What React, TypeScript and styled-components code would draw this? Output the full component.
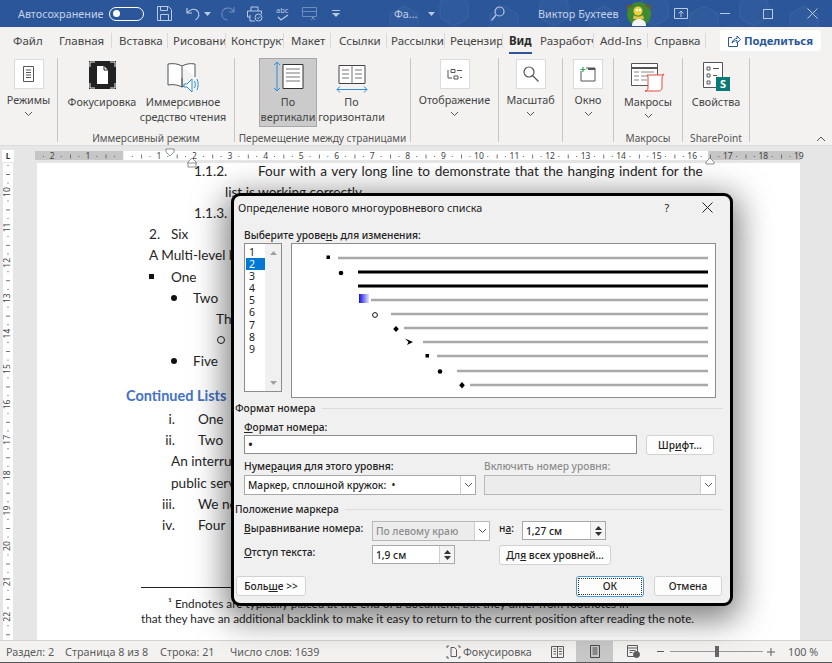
import React from 'react';
import styled, { createGlobalStyle } from 'styled-components';

const uiFont = '"Noto Sans", "Open Sans", sans-serif';
const docFont = 'Lato, "Noto Sans", sans-serif';

const GlobalStyle = createGlobalStyle`
  html, body { margin: 0; padding: 0; background: #e6e6e6; }
  * { box-sizing: border-box; }
`;

const Window = styled.div`
  position: relative;
  width: 832px;
  height: 663px;
  overflow: hidden;
  display: flex;
  flex-direction: column;
  font-family: ${uiFont};
  color: #333;
`;

/* title bar */
const TitleBar = styled.div`
  position: relative;
  flex: none;
  height: 27px;
  display: flex;
  align-items: center;
  padding-left: 18px;
  background: #2b579a;
  color: #c4d1e6;
  font-size: 10.8px;
  white-space: nowrap;
`;
const HexOverlay = styled.svg`
  position: absolute;
  left: 0;
  top: 0;
  pointer-events: none;
`;
const TitleSlot = styled.span<{ $w: number; $ml?: number; $left?: boolean }>`
  position: relative;
  flex: none;
  display: flex;
  align-items: center;
  justify-content: ${p => (p.$left ? 'flex-start' : 'center')};
  width: ${p => p.$w}px;
  margin-left: ${p => p.$ml || 0}px;
`;
const Toggle = styled.span`
  position: relative;
  flex: none;
  width: 35px;
  height: 14px;
  margin-left: 7px;
  border: 1.5px solid #fff;
  border-radius: 7px;
  &::before {
    content: '';
    position: absolute;
    left: 3px;
    top: 2px;
    width: 7px;
    height: 7px;
    border-radius: 50%;
    background: #fff;
  }
`;

/* tabs */
const TabBar = styled.div`
  flex: none;
  height: 27px;
  display: flex;
  align-items: center;
  background: #f3f2f1;
  font-size: 11.5px;
  color: #444;
`;
const Tab = styled.div<{ $w: number; $pl: number; $sep?: boolean; $active?: boolean }>`
  position: relative;
  flex: none;
  width: ${p => p.$w}px;
  height: 15px;
  line-height: 15px;
  padding-left: ${p => p.$pl}px;
  padding-right: 3px;
  overflow: ${p => (p.$active ? 'visible' : 'hidden')};
  white-space: nowrap;
  border-right: ${p => (p.$sep ? '1px solid #dcdad8' : '0')};
  font-weight: ${p => (p.$active ? 700 : 400)};
  color: ${p => (p.$active ? '#2b2b2b' : '#444')};
  ${p =>
    p.$active &&
    `&::after {
      content: '';
      position: absolute;
      left: 6px;
      right: 3px;
      bottom: -6px;
      height: 2.5px;
      background: #2b579a;
    }`}
`;
const ShareButton = styled.div`
  flex: none;
  width: 101px;
  height: 21px;
  margin-left: 14px;
  display: flex;
  align-items: center;
  gap: 3px;
  padding-left: 7px;
  background: #fff;
  border-radius: 3px;
  color: #2b579a;
  font-size: 11.3px;
  font-weight: 700;
  white-space: nowrap;
`;

/* ribbon */
const Ribbon = styled.div`
  flex: none;
  height: 91px;
  display: flex;
  padding: 4px 0 3px;
  background: #f3f2f1;
  font-size: 10.8px;
  color: #444;
`;
const Group = styled.div<{ $w: number }>`
  flex: none;
  width: ${p => p.$w}px;
  display: flex;
  flex-direction: column;
  border-right: 1px solid #c8c6c4;
`;
const GroupButtons = styled.div`
  flex: 1;
  display: flex;
  justify-content: center;
`;
const GroupLabel = styled.div`
  height: 14px;
  margin-bottom: -3px;
  line-height: 14px;
  text-align: center;
  font-size: 10.1px;
  white-space: nowrap;
  color: #555;
`;
const RibbonButton = styled.div<{ $w: number; $active?: boolean }>`
  flex: none;
  width: ${p => p.$w}px;
  height: ${p => (p.$active ? '69px' : 'auto')};
  display: flex;
  flex-direction: column;
  align-items: center;
  text-align: center;
  line-height: 15px;
  white-space: nowrap;
  background: ${p => (p.$active ? '#cbcbcb' : 'transparent')};
  outline: ${p => (p.$active ? '1px solid #a8a8a8' : '0')};
  outline-offset: -1px;
`;
const IconSlot = styled.div<{ $h: number }>`
  height: ${p => p.$h}px;
  display: flex;
  align-items: flex-start;
  justify-content: center;
`;
const BoxIcon = styled.div`
  width: 30px;
  height: 30px;
  margin-top: 1px;
  display: flex;
  align-items: center;
  justify-content: center;
  background: #fff;
  border: 1px solid #dddcdb;
`;
const ChevronSlot = styled.span`
  display: block;
  margin-top: 4px;
  line-height: 0;
`;
const CollapseSlot = styled.div`
  flex: 1;
  display: flex;
  align-items: flex-end;
  justify-content: flex-end;
  padding: 0 6px 0 0;
`;

/* rulers */
const RulerBar = styled.div`
  position: relative;
  z-index: 2;
  flex: none;
  height: 18px;
  display: flex;
  padding-left: 2px;
  background: #e6e6e6;
  border-top: 1px solid #dcdcdc;
`;
const RulerCorner = styled.div`
  flex: none;
  width: 12px;
  height: 12px;
  margin-top: 4px;
  background: #fff;
  color: #333;
  font-size: 8px;
  font-weight: 700;
  line-height: 11px;
  text-align: center;
`;
const RulerSvg = styled.svg`
  flex: none;
  overflow: visible;
  font-family: ${uiFont};
`;

/* document */
const DocArea = styled.div`
  flex: 1;
  min-height: 0;
  display: flex;
  background: #e6e6e6;
`;
const SideRuler = styled.svg`
  flex: none;
  margin: 0 24px 0 3px;
  font-family: ${uiFont};
`;
const Page = styled.div`
  flex: none;
  width: 763px;
  height: 100%;
  overflow: hidden;
  background: #fff;
  font-family: ${docFont};
  font-size: 13.6px;
  color: #262626;
`;
const DocLines = styled.div`
  margin-top: -3px;
`;
const DocLine = styled.div<{ $indent: number; $justify?: number }>`
  display: flex;
  align-items: center;
  height: 21.2px;
  padding-left: ${p => p.$indent}px;
  word-spacing: ${p => p.$justify || 0}px;
  white-space: nowrap;
`;
const Marker = styled.span<{ $w: number; $right?: boolean; $pr?: number }>`
  flex: none;
  width: ${p => p.$w}px;
  padding-right: ${p => p.$pr || 0}px;
  text-align: ${p => (p.$right ? 'right' : 'left')};
`;
const Bullet = styled.span<{ $kind: 'square' | 'dot' | 'ring'; $w: number }>`
  flex: none;
  width: ${p => p.$w}px;
  &::before {
    content: '';
    display: block;
    width: ${p => (p.$kind === 'square' ? 5 : 6)}px;
    height: ${p => (p.$kind === 'square' ? 5 : 6)}px;
    background: ${p => (p.$kind === 'ring' ? 'transparent' : '#111')};
    border: ${p => (p.$kind === 'ring' ? '1px solid #222' : '0')};
    border-radius: ${p => (p.$kind === 'square' ? '0' : '50%')};
  }
`;
const DocHeading = styled.div`
  margin-top: 13px;
  margin-bottom: 2.5px;
  height: 21px;
  line-height: 21px;
  padding-left: 89px;
  color: #4472c4;
  font-size: 14.5px;
  font-weight: 700;
  white-space: nowrap;
`;
const FootRule = styled.div`
  width: 190px;
  height: 1px;
  margin: 51.5px 0 0 104px;
  background: #222;
`;
const FootLine = styled.div<{ $indent: number }>`
  height: 15px;
  line-height: 15px;
  padding-left: ${p => p.$indent}px;
  font-family: ${docFont};
  font-size: 11.75px;
  white-space: nowrap;
`;
const FootNotes = styled.div`
  margin-top: 8px;
`;

/* status bar */
const StatusBar = styled.div`
  flex: none;
  height: 23px;
  display: flex;
  align-items: center;
  padding-left: 6px;
  background: #f3f2f1;
  border-top: 1px solid #d6d4d2;
  border-bottom: 1px solid #555;
  font-size: 10.8px;
  color: #5c5c5c;
  white-space: nowrap;
`;
const StatusItem = styled.span<{ $w: number }>`
  flex: none;
  width: ${p => p.$w}px;
`;
const FocusItem = styled.span`
  flex: none;
  display: flex;
  align-items: center;
  gap: 2px;
  margin-left: 133px;
  width: 92px;
`;
const ViewButton = styled.span<{ $w: number; $active?: boolean }>`
  flex: none;
  align-self: stretch;
  width: ${p => p.$w}px;
  display: flex;
  align-items: center;
  justify-content: center;
  background: ${p => (p.$active ? '#c8c8c8' : 'transparent')};
`;
const ZoomSlider = styled.span`
  position: relative;
  flex: none;
  width: 93px;
  height: 1px;
  margin: 0 3px;
  background: #9a9a9a;
  &::after {
    content: '';
    position: absolute;
    left: 45px;
    top: -5px;
    width: 4px;
    height: 11px;
    background: #666;
  }
`;
const ZoomPct = styled.span`
  flex: none;
  margin-left: 12px;
`;

/* dialog */
const Dialog = styled.div`
  position: absolute;
  z-index: 5;
  left: 231px;
  top: 193px;
  width: 502px;
  height: 413px;
  display: flex;
  flex-direction: column;
  background: #f0f0f0;
  border: 3px solid #000;
  border-radius: 9px;
  box-shadow: 0 8px 32px 6px rgba(0, 0, 0, 0.5);
  font-size: 10.2px;
  font-weight: 500;
  color: #222;
`;
const DialogTitle = styled.div`
  flex: none;
  height: 22px;
  display: flex;
  align-items: center;
  padding-left: 4px;
  font-size: 10.8px;
  font-weight: 400;
  color: #222;
  white-space: nowrap;
`;
const TitleAction = styled.span<{ $ml: number }>`
  flex: none;
  display: flex;
  margin-left: ${p => p.$ml}px;
`;
const DialogBody = styled.div`
  flex: none;
  padding: 0 14px 0 10px;
`;
const FieldLabel = styled.div<{ $mt?: number; $off?: boolean }>`
  height: 12px;
  line-height: 12px;
  margin-top: ${p => p.$mt || 0}px;
  white-space: nowrap;
  color: ${p => (p.$off ? '#8c8c8c' : '#222')};
  u { text-underline-offset: 1px; }
`;
const LevelArea = styled.div`
  display: flex;
  gap: 9px;
  margin-top: 2px;
`;
const LevelList = styled.div`
  flex: none;
  width: 38px;
  height: 149px;
  display: flex;
  background: #fff;
  border: 1px solid #8c8c8c;
`;
const LevelItems = styled.div`
  flex: none;
  width: 20px;
  padding: 2px 0 0 1px;
`;
const LevelItem = styled.div<{ $on?: boolean }>`
  height: 12.1px;
  line-height: 12px;
  padding-left: 3px;
  background: ${p => (p.$on ? '#0078d7' : 'transparent')};
  color: ${p => (p.$on ? '#fff' : '#222')};
  font-weight: 400;
  font-size: 10.5px;
`;
const LevelScroll = styled.div`
  flex: 1;
  display: flex;
  flex-direction: column;
  align-items: center;
  justify-content: space-between;
  padding: 7px 0 6px;
  background: #f0f0f0;
`;
const Preview = styled.div`
  flex: none;
  width: 425px;
  height: 155px;
  background: #fff;
  border: 1px solid #8c8c8c;
`;
const SectionHead = styled.div<{ $mt: number }>`
  display: flex;
  align-items: center;
  gap: 6px;
  height: 14px;
  margin: ${p => p.$mt}px -7px 0 -9px;
  white-space: nowrap;
  &::after {
    content: '';
    flex: 1;
    height: 1px;
    background: #dcdcdc;
  }
`;
const InputRow = styled.div`
  display: flex;
  gap: 9px;
  margin-top: 2px;
`;
const TextInput = styled.div`
  flex: none;
  width: 393px;
  height: 19px;
  padding-left: 3px;
  line-height: 17px;
  background: #fff;
  border: 1px solid #8c8c8c;
  font-size: 13px;
`;
const PushButton = styled.div<{ $w: number; $primary?: boolean }>`
  position: relative;
  flex: none;
  width: ${p => p.$w}px;
  height: ${p => (p.$primary ? 21 : 20)}px;
  line-height: 18px;
  text-align: center;
  background: #fdfdfd;
  border: 1px solid ${p => (p.$primary ? '#4a9ad8' : '#d2d2d2')};
  border-radius: 3px;
  white-space: nowrap;
  ${p =>
    p.$primary &&
    `&::after {
      content: '';
      position: absolute;
      inset: 1px;
      border: 1px dotted #333;
    }`}
`;
const TwoColumns = styled.div`
  display: grid;
  grid-template-columns: 232px 232px;
  column-gap: 8px;
`;
const SelectBox = styled.div<{ $mt?: number; $w?: number; $off?: boolean }>`
  display: flex;
  align-items: center;
  justify-content: space-between;
  width: ${p => (p.$w ? `${p.$w}px` : 'auto')};
  height: 20px;
  margin-top: ${p => p.$mt || 0}px;
  padding-left: 3px;
  background: ${p => (p.$off ? '#ececec' : '#fff')};
  border: 1px solid ${p => (p.$off ? '#b9b9b9' : '#a8a8a8')};
  color: ${p => (p.$off ? '#8c8c8c' : '#222')};
  white-space: nowrap;
`;
const SelectArrow = styled.span`
  flex: none;
  align-self: stretch;
  width: 15px;
  display: flex;
  align-items: center;
  justify-content: center;
  background: #fff;
  border-left: 1px solid #d0d0d0;
`;
const PositionRow = styled.div<{ $mt: number }>`
  display: flex;
  align-items: flex-start;
  margin-top: ${p => p.$mt}px;
`;
const PositionLabel = styled.div<{ $w: number; $ml?: number }>`
  flex: none;
  width: ${p => p.$w}px;
  margin-left: ${p => p.$ml || 0}px;
  line-height: 15px;
  white-space: nowrap;
  u { text-underline-offset: 1px; }
`;
const SpinBox = styled.div<{ $w: number }>`
  flex: none;
  display: flex;
  align-items: center;
  justify-content: space-between;
  width: ${p => p.$w}px;
  height: 19px;
  padding-left: 3px;
  background: #fff;
  border: 1px solid #a8a8a8;
`;
const SpinArrows = styled.span`
  flex: none;
  align-self: stretch;
  width: 15px;
  display: flex;
  flex-direction: column;
  align-items: center;
  justify-content: center;
  gap: 2px;
  background: #f4f4f4;
  border-left: 1px solid #d0d0d0;
`;
const Footer = styled.div`
  flex: none;
  display: flex;
  align-items: flex-start;
  margin-top: 11px;
  padding: 0 8px 0 2px;
`;
const FooterRight = styled.div`
  margin-left: auto;
  display: flex;
  gap: 10px;
`;

const MiniChevron = ({ color = '#555', size = 9 }: { color?: string; size?: number }) => (
  <svg width={size} height={size - 3} viewBox='0 0 9 6' fill='none'>
    <path d='M1 1l3.5 3.5L8 1' stroke={color} strokeWidth='1' />
  </svg>
);

const Tri = ({ up, color = '#333' }: { up?: boolean; color?: string }) => (
  <svg width='7' height='4' viewBox='0 0 7 4'>
    <path d={up ? 'M3.5 0L7 4H0z' : 'M0 0h7L3.5 4z'} fill={color} />
  </svg>
);

const T = '#b9c9e2';

const hexes = [390, 440, 490, 540, 590, 640, 690, 740, 790].map((x, i) => {
  const d = i % 2 ? -12 : 0;
  return `${x},${14 + d} ${x + 14},${6 + d} ${x + 28},${14 + d} ${x + 28},${30 + d} ${x + 14},${38 + d} ${x},${30 + d}`;
});

const Avatar = () => (
  <svg width='24' height='24' viewBox='0 0 24 24'>
    <circle cx='12' cy='12' r='12' fill='#3f8a2e' />
    <path d='M0 8c6-7 18-7 24 0V3H0z' fill='#6b5a2a' />
    <circle cx='11' cy='9' r='4.5' fill='#f2cf3a' />
    <path d='M7 13c2 2 6 2 9 0l1 4H6z' fill='#e2c24a' />
    <path d='M5 24c0-5 3-7 7-7s7 2 7 7z' fill='#f4f4f4' />
    <circle cx='10' cy='8' r='1.2' fill='#fff' />
    <circle cx='13' cy='8' r='1.2' fill='#fff' />
  </svg>
);

const RulerGraphic = () => {
  const zero = 123.4;
  const cm = 35.55;
  const marks: React.ReactNode[] = [];
  for (let c = -3; c <= 19; c++) {
    const x = zero + c * cm;
    if (c !== 0 && c > -3) {
      marks.push(
        <text key={`n${c}`} x={x} y={13.2} fontSize='8.5' textAnchor='middle' fill='#444'>
          {Math.abs(c)}
        </text>
      );
    }
    if (c < 19) {
      if (x + cm / 4 > 35) marks.push(<circle key={`a${c}`} cx={x + cm / 4} cy={10.5} r={0.6} fill='#555' />);
      if (x + cm / 2 > 35) marks.push(<rect key={`b${c}`} x={x + cm / 2} y={8.5} width={0.9} height={4} fill='#666' />);
      if (x + (3 * cm) / 4 > 35) marks.push(<circle key={`c${c}`} cx={x + (3 * cm) / 4} cy={10.5} r={0.6} fill='#555' />);
    }
  }
  return (
    <RulerSvg width='818' height='18' viewBox='14 0 818 18'>
      <rect x='35' y='5' width='88.4' height='9' fill='#c6c6c6' />
      <rect x='123.4' y='5' width='585' height='9' fill='#fff' />
      <rect x='708.4' y='5' width='92' height='9' fill='#c6c6c6' />
      {marks}
      <path d='M166 3h8v3l-4 4-4-4z' fill='#fff' stroke='#777' strokeWidth='.8' />
      <path d='M188 16l4-4 4 4v2h-8z' fill='#fff' stroke='#777' strokeWidth='.8' />
      <rect x='188' y='17' width='8' height='4' fill='#fff' stroke='#777' strokeWidth='.8' />
      <path d='M706 16l4-4 4 4v2h-8z' fill='#fff' stroke='#777' strokeWidth='.8' />
    </RulerSvg>
  );
};

const VerticalRuler = () => {
  const at = (n: number) => 192 + (n - 10) * 35.4 - 163;
  const marks: React.ReactNode[] = [];
  for (let n = 9; n <= 22; n++) {
    const y = at(n);
    if (n > 9) {
      marks.push(
        <text key={`t${n}`} x={5} y={y} fontSize='8.5' fill='#444' textAnchor='middle' dominantBaseline='middle' transform={`rotate(-90 5 ${y})`}>
          {n}
        </text>
      );
    }
    marks.push(<circle key={`a${n}`} cx={5} cy={y + 8.85} r={0.6} fill='#555' />);
    marks.push(<rect key={`b${n}`} x={3} y={y + 17.5} width={4} height={0.9} fill='#666' />);
    marks.push(<circle key={`c${n}`} cx={5} cy={y + 26.5} r={0.6} fill='#555' />);
  }
  return (
    <SideRuler width='10' height='477' viewBox='0 0 10 477'>
      <rect width='10' height='477' fill='#fff' />
      {marks}
    </SideRuler>
  );
};

const previewRows: [number, number, boolean][] = [
  [338, 258, false],
  [358, 272, true],
  [358, 286, true],
  [371, 300, false],
  [391, 314, false],
  [404, 328, false],
  [423, 342, false],
  [437, 356, false],
  [457, 371, false],
  [470, 385, false],
];

const PreviewGraphic = () => (
  <svg width='423' height='153' viewBox='292 244 423 153'>
    <defs>
      <linearGradient id='blueFade' x1='0' x2='1' y1='0' y2='0'>
        <stop offset='0' stopColor='#1010e0' />
        <stop offset='1' stopColor='#e4e4ff' />
      </linearGradient>
    </defs>
    {previewRows.map(([x, y, heavy]) => (
      <rect key={y} x={x} y={y - (heavy ? 1.5 : 1.25)} width={708 - x} height={heavy ? 3 : 2.5} fill={heavy ? '#000' : '#a9a9a9'} />
    ))}
    <rect x='326.5' y='255.5' width='3.5' height='3.5' fill='#000' />
    <circle cx='341' cy='273' r='2.3' fill='#000' />
    <rect x='359' y='294' width='10' height='9' fill='url(#blueFade)' />
    <circle cx='375' cy='315' r='2.4' fill='#fff' stroke='#111' strokeWidth='1' />
    <path d='M396 326l2.8 3-2.8 3-2.8-3z' fill='#000' />
    <path d='M405 338.5l8 3.5-6 3 1.5-3z' fill='#000' />
    <rect x='425.5' y='354' width='3.5' height='3.5' fill='#000' />
    <circle cx='440' cy='371.5' r='2.3' fill='#000' />
    <path d='M462 382l2.8 3.2-2.8 3.2-2.8-3.2z' fill='#000' />
  </svg>
);

const App = () => (
  <>
    <GlobalStyle />
    <Window>
      <TitleBar>
        <HexOverlay width='832' height='27'>
          {hexes.map(points => (
            <polygon key={points} points={points} fill='rgba(255,255,255,0.025)' stroke='rgba(255,255,255,0.07)' />
          ))}
        </HexOverlay>
        <TitleSlot $w={84} $left>Автосохранение</TitleSlot>
        <Toggle />
        <TitleSlot $w={40}>
          <svg width='15' height='15' viewBox='0 0 15 15' fill='none' stroke={T}>
            <path d='M.5.5h11l3 3v11H.5zM3.5.5v4h7v-4M3.5 14.5v-6h8v6' />
          </svg>
        </TitleSlot>
        <TitleSlot $w={18}>
          <svg width='15' height='14' viewBox='0 0 15 14' fill='none' stroke={T} strokeWidth='1.2'>
            <path d='M1 1v5h5M1.5 6C3.5 2.5 8 1 11 3.5c3 2.5 2.5 7-1.5 9.5' />
          </svg>
        </TitleSlot>
        <TitleSlot $w={10}>
          <Tri color={T} />
        </TitleSlot>
        <TitleSlot $w={30}>
          <svg width='15' height='15' viewBox='0 0 15 15' fill='none' stroke='#6d8dbb' strokeWidth='1.1'>
            <path d='M14 1v5H9M13.5 6A6 6 0 1 0 7.5 14' />
          </svg>
        </TitleSlot>
        <TitleSlot $w={26}>
          <svg width='16' height='16' viewBox='0 0 16 16' fill='none' stroke={T}>
            <path d='M4 5V1h7v4M3 11H.5V5h14v3M3 9v6h5' />
            <circle cx='11.5' cy='11.5' r='3.5' />
            <path d='M10 11.5l1.2 1.2 2-2.2' />
          </svg>
        </TitleSlot>
        <TitleSlot $w={30}>
          <svg width='16' height='16' viewBox='0 0 16 16' fill='none' stroke={T}>
            <text x='1' y='7' fontSize='7.5' fill={T} stroke='none' fontFamily='Noto Sans'>abc</text>
            <path d='M3 11l3 3 7-5' strokeWidth='1.2' />
          </svg>
        </TitleSlot>
        <TitleSlot $w={22}>
          <svg width='15' height='14' viewBox='0 0 15 14' fill='none' stroke='#6d8dbb'>
            <path d='M.5.5h14v9H.5zM.5 4.5h14M9 9l4 4M13 9l-4 4' />
          </svg>
        </TitleSlot>
        <TitleSlot $w={32}>
          <svg width='8' height='8' viewBox='0 0 8 8' fill={T}>
            <rect x='0' y='0' width='8' height='1' />
            <path d='M0 3h8L4 7z' />
          </svg>
        </TitleSlot>
        <TitleSlot $w={30} $ml={42} $left>Фа...</TitleSlot>
        <TitleSlot $w={14}>
          <Tri color={T} />
        </TitleSlot>
        <TitleSlot $w={40} $ml={40}>
          <svg width='14' height='15' viewBox='0 0 14 15' fill='none' stroke={T} strokeWidth='1.2'>
            <circle cx='8.5' cy='5.5' r='4.5' />
            <path d='M5 9l-4.5 5.5' />
          </svg>
        </TitleSlot>
        <TitleSlot $w={84} $ml={20} $left>Виктор Бухтеев</TitleSlot>
        <TitleSlot $w={33}>
          <Avatar />
        </TitleSlot>
        <TitleSlot $w={52}>
          <svg width='14' height='11' viewBox='0 0 14 11' fill='none' stroke={T}>
            <path d='M.5.5h13v10H.5z' />
            <path d='M7 9V3M4.5 5.5L7 3l2.5 2.5' />
          </svg>
        </TitleSlot>
        <TitleSlot $w={36}>
          <svg width='10' height='2' viewBox='0 0 10 2'>
            <rect width='10' height='1' fill={T} />
          </svg>
        </TitleSlot>
        <TitleSlot $w={50}>
          <svg width='10' height='10' viewBox='0 0 10 10' fill='none' stroke={T}>
            <rect x='.5' y='.5' width='9' height='9' />
          </svg>
        </TitleSlot>
        <TitleSlot $w={38}>
          <svg width='11' height='11' viewBox='0 0 11 11' stroke={T}>
            <path d='M.5.5l10 10M10.5.5l-10 10' />
          </svg>
        </TitleSlot>
      </TitleBar>

      <TabBar>
        <Tab $w={59} $pl={13}>Файл</Tab>
        <Tab $w={53} $pl={0} $sep>Главная</Tab>
        <Tab $w={56} $pl={7} $sep>Вставка</Tab>
        <Tab $w={58} $pl={5} $sep>Рисование</Tab>
        <Tab $w={58} $pl={5} $sep>Конструктор</Tab>
        <Tab $w={47} $pl={7} $sep>Макет</Tab>
        <Tab $w={56} $pl={8} $sep>Ссылки</Tab>
        <Tab $w={58} $pl={4} $sep>Рассылки</Tab>
        <Tab $w={58} $pl={5} $sep>Рецензирование</Tab>
        <Tab $w={32} $pl={6} $active>Вид</Tab>
        <Tab $w={59} $pl={5} $sep>Разработчик</Tab>
        <Tab $w={54} $pl={6} $sep>Add-Ins</Tab>
        <Tab $w={58} $pl={6} $sep>Справка</Tab>
        <ShareButton>
          <svg width='14' height='13' viewBox='0 0 14 13' fill='none' stroke='#2b579a'>
            <path d='M5 3.5H1.5v9h9V9M5 9c.5-3 3-4.5 5-4.5V2l3.5 3.5L10 9V6.5C8 6.500 6 7.500 5 9z' />
          </svg>
          Поделиться
        </ShareButton>
      </TabBar>

      <Ribbon>
        <Group $w={58}>
          <GroupButtons>
            <RibbonButton $w={56}>
              <IconSlot $h={34}>
                <BoxIcon>
                  <svg width='11' height='16' viewBox='0 0 11 16' fill='none' stroke='#555'>
                    <path d='M.5.5h10v15H.5zM3 4h5M3 6.5h5M3 9h5M3 11.5h5' />
                  </svg>
                </BoxIcon>
              </IconSlot>
              Режимы
              <ChevronSlot>
                <MiniChevron />
              </ChevronSlot>
            </RibbonButton>
          </GroupButtons>
        </Group>
        <Group $w={177}>
          <GroupButtons>
            <RibbonButton $w={74}>
              <IconSlot $h={36}>
                <svg width='27' height='28' viewBox='0 0 27 28' style={{ marginTop: 3 }}>
                  <rect width='27' height='28' fill='#222' />
                  <path d='M8 5h7l4 4v14H8z' fill='#fff' />
                  <path d='M15 5v4h4' fill='none' stroke='#222' />
                  <path d='M1 6V1h5M21 1h5v5M26 22v5h-5M6 27H1v-5' fill='none' stroke='#eee' />
                </svg>
              </IconSlot>
              Фокусировка
            </RibbonButton>
            <RibbonButton $w={88}>
              <IconSlot $h={36}>
                <svg width='32' height='30' viewBox='0 0 32 30' fill='none' style={{ marginTop: 5 }}>
                  <path d='M1 1c6-1 10 0 14 2v21c-4-2-8-3-14-2z' fill='#fff' stroke='#555' />
                  <path d='M15 3c4-2 8-3 13-2v13' stroke='#555' fill='#fff' />
                  <path d='M15 15v9l2-1' stroke='#555' />
                  <path d='M17 21h3l5-5v13l-5-5h-3z' fill='#fff' stroke='#2a8fd8' />
                  <path d='M27.5 18c1 2 1 5 0 7M30 16c1.5 3 1.5 8 0 11' stroke='#2a8fd8' />
                </svg>
              </IconSlot>
              Иммерсивное<br />средство чтения
            </RibbonButton>
          </GroupButtons>
          <GroupLabel>Иммерсивный режим</GroupLabel>
        </Group>
        <Group $w={176}>
          <GroupButtons>
            <RibbonButton $w={58} $active>
              <IconSlot $h={36}>
                <svg width='32' height='32' viewBox='0 0 32 32' fill='none' style={{ marginTop: 3 }}>
                  <path d='M5 1v29M2 4l3-3 3 3M2 27l3 3 3-3' stroke='#2a8fd8' />
                  <path d='M11 3.5h20v24H11z' fill='#fff' stroke='#333' />
                  <path d='M14 8h14M14 12h14M14 16h14M14 20h14' stroke='#777' />
                </svg>
              </IconSlot>
              По<br />вертикали
            </RibbonButton>
            <RibbonButton $w={69}>
              <IconSlot $h={36}>
                <svg width='32' height='28' viewBox='0 0 32 28' fill='none' style={{ marginTop: 7 }}>
                  <path d='M3 .5h26v18H3z' fill='#fff' stroke='#444' />
                  <path d='M16 .5v18M6 5h7M6 9h7M6 13h7M19 5h7M19 9h7M19 13h7' stroke='#777' />
                  <path d='M1 24.5h30M4 21.5l-3 3 3 3M28 21.5l3 3-3 3' stroke='#2a8fd8' />
                </svg>
              </IconSlot>
              По<br />горизонтали
            </RibbonButton>
          </GroupButtons>
          <GroupLabel>Перемещение между страницами</GroupLabel>
        </Group>
        <Group $w={88}>
          <GroupButtons>
            <RibbonButton $w={84}>
              <IconSlot $h={34}>
                <BoxIcon>
                  <svg width='16' height='15' viewBox='0 0 16 15' fill='none' stroke='#555'>
                    <path d='M1 3v8h4M4 2.5h4v3H4zM7 9h4v3H7zM10 3.5h5M13 10.5h2' />
                  </svg>
                </BoxIcon>
              </IconSlot>
              Отображение
              <ChevronSlot>
                <MiniChevron />
              </ChevronSlot>
            </RibbonButton>
          </GroupButtons>
        </Group>
        <Group $w={64}>
          <GroupButtons>
            <RibbonButton $w={62}>
              <IconSlot $h={34}>
                <BoxIcon>
                  <svg width='16' height='16' viewBox='0 0 16 16' fill='none' stroke='#555' strokeWidth='1.2'>
                    <circle cx='6' cy='6' r='5' />
                    <path d='M9.5 9.5l6 6' />
                  </svg>
                </BoxIcon>
              </IconSlot>
              Масштаб
              <ChevronSlot>
                <MiniChevron />
              </ChevronSlot>
            </RibbonButton>
          </GroupButtons>
        </Group>
        <Group $w={51}>
          <GroupButtons>
            <RibbonButton $w={49}>
              <IconSlot $h={34}>
                <BoxIcon>
                  <svg width='16' height='15' viewBox='0 0 16 15' fill='none'>
                    <path d='M1 4v10h14V1H6' stroke='#555' />
                    <path d='M8 2h7' stroke='#555' strokeWidth='2' />
                    <path d='M3 0v5M.5 2.5h5' stroke='#2fa65a' strokeWidth='1.2' />
                  </svg>
                </BoxIcon>
              </IconSlot>
              Окно
              <ChevronSlot>
                <MiniChevron />
              </ChevronSlot>
            </RibbonButton>
          </GroupButtons>
        </Group>
        <Group $w={69}>
          <GroupButtons>
            <RibbonButton $w={67}>
              <IconSlot $h={36}>
                <svg width='34' height='30' viewBox='0 0 34 30' fill='none' style={{ marginTop: 5 }}>
                  <path d='M.5.5h26v22H.5z' fill='#fff' stroke='#555' />
                  <path d='M.5 5h26' stroke='#555' strokeWidth='2' />
                  <path d='M3 9h5M10 9h13M3 13h5M10 13h8M3 17h5M10 17h6' stroke='#888' />
                  <path d='M16 12h15l2-1-2 3v11c0 2-2 3-4 3H14c2 0 3-1 3-3V14c0-1-.5-2-1-2z' fill='#fff' stroke='#e8453c' />
                </svg>
              </IconSlot>
              Макросы
              <ChevronSlot>
                <MiniChevron />
              </ChevronSlot>
            </RibbonButton>
          </GroupButtons>
          <GroupLabel>Макросы</GroupLabel>
        </Group>
        <Group $w={67}>
          <GroupButtons>
            <RibbonButton $w={65}>
              <IconSlot $h={36}>
                <svg width='27' height='29' viewBox='0 0 27 29' fill='none' style={{ marginTop: 4 }}>
                  <path d='M.5.5h19v25H.5z' fill='#fff' stroke='#555' />
                  <path d='M4 5h3v3H4zM4 12h3v3H4zM4 19h3v3H4zM10 6.5h6M10 13.5h4' stroke='#555' />
                  <rect x='13' y='15' width='14' height='14' fill='#0b7a75' />
                  <text x='20' y='26' fill='#fff' fontSize='11' fontWeight='700' textAnchor='middle' fontFamily='Noto Sans'>S</text>
                </svg>
              </IconSlot>
              Свойства
            </RibbonButton>
          </GroupButtons>
          <GroupLabel>SharePoint</GroupLabel>
        </Group>
        <CollapseSlot>
          <svg width='10' height='6' viewBox='0 0 10 6' fill='none' stroke='#555'>
            <path d='M1 5l4-4 4 4' />
          </svg>
        </CollapseSlot>
      </Ribbon>

      <RulerBar>
        <RulerCorner>L</RulerCorner>
        <RulerGraphic />
      </RulerBar>

      <DocArea>
        <VerticalRuler />
        <Page>
          <DocLines>
            <DocLine $indent={157} $justify={1.1}>
              <Marker $w={64}>1.1.2.</Marker>Four with a very long line to demonstrate that the hanging indent for the
            </DocLine>
            <DocLine $indent={188}>list is working correctly.</DocLine>
            <DocLine $indent={157}>
              <Marker $w={64}>1.1.3.</Marker>Five
            </DocLine>
            <DocLine $indent={112}>
              <Marker $w={22}>2.</Marker>Six
            </DocLine>
            <DocLine $indent={112}>A Multi-level list</DocLine>
            <DocLine $indent={112}>
              <Bullet $kind='square' $w={22} />One
            </DocLine>
            <DocLine $indent={134}>
              <Bullet $kind='dot' $w={22} />Two
            </DocLine>
            <DocLine $indent={179}>Three</DocLine>
            <DocLine $indent={180}>
              <Bullet $kind='ring' $w={22} />Four
            </DocLine>
            <DocLine $indent={134}>
              <Bullet $kind='dot' $w={22} />Five
            </DocLine>
          </DocLines>
          <DocHeading>Continued Lists</DocHeading>
          <DocLine $indent={104}>
            <Marker $w={57} $right $pr={23}>i.</Marker>One
          </DocLine>
          <DocLine $indent={104}>
            <Marker $w={57} $right $pr={23}>ii.</Marker>Two
          </DocLine>
          <DocLine $indent={134}>An interruption</DocLine>
          <DocLine $indent={134}>public service</DocLine>
          <DocLine $indent={104}>
            <Marker $w={57} $right $pr={23}>iii.</Marker>We now
          </DocLine>
          <DocLine $indent={104}>
            <Marker $w={57} $right $pr={23}>iv.</Marker>Four
          </DocLine>
          <FootRule />
          <FootNotes>
            <FootLine $indent={131}>¹ Endnotes are typically placed at the end of a document, but they differ from footnotes in</FootLine>
            <FootLine $indent={104}>that they have an additional backlink to make it easy to return to the current position after reading the note.</FootLine>
          </FootNotes>
        </Page>
      </DocArea>

      <StatusBar>
        <StatusItem $w={59}>Раздел: 2</StatusItem>
        <StatusItem $w={95}>Страница 8 из 8</StatusItem>
        <StatusItem $w={70}>Строка: 21</StatusItem>
        <StatusItem $w={83}>Число слов: 1639</StatusItem>
        <FocusItem>
          <svg width='15' height='14' viewBox='0 0 15 14' fill='none' stroke='#5c5c5c'>
            <path d='M1 3V1h2M12 1h2v2M14 11v2h-2M3 13H1v-2M5 2.5h3.5l2 2v7H5z' />
          </svg>
          Фокусировка
        </FocusItem>
        <ViewButton $w={38}>
          <svg width='13' height='12' viewBox='0 0 13 12' fill='none' stroke='#5c5c5c'>
            <path d='M.5.5h12v11H.5zM6.5.5v11M2.5 3h2.5M2.5 5.5h2.5M2.5 8h2.5M8 3h3M8 5.5h3M8 8h3' />
          </svg>
        </ViewButton>
        <ViewButton $w={37} $active>
          <svg width='10' height='13' viewBox='0 0 10 13' fill='none' stroke='#4a4a4a'>
            <path d='M.5.5h9v12h-9zM2.5 3h5M2.5 5h5M2.5 7h5M2.5 9h5' />
          </svg>
        </ViewButton>
        <ViewButton $w={40}>
          <svg width='13' height='13' viewBox='0 0 13 13' fill='none' stroke='#5c5c5c'>
            <path d='M.5.5h10v11H.5zM.5 3h10M2.5 5.5h6M2.5 7.5h3' />
            <circle cx='9.5' cy='9.5' r='3' fill='#5c5c5c' />
          </svg>
        </ViewButton>
        <ViewButton $w={14}>
          <svg width='7' height='1' viewBox='0 0 7 1'>
            <rect width='7' height='1' fill='#5c5c5c' />
          </svg>
        </ViewButton>
        <ZoomSlider />
        <ViewButton $w={10}>
          <svg width='8' height='8' viewBox='0 0 8 8' stroke='#5c5c5c'>
            <path d='M4 0v8M0 4h8' />
          </svg>
        </ViewButton>
        <ZoomPct>100 %</ZoomPct>
      </StatusBar>

      <Dialog>
        <DialogTitle>
          Определение нового многоуровневого списка
          <TitleAction $ml={182}>
            <span>?</span>
          </TitleAction>
          <TitleAction $ml={33}>
            <svg width='11' height='11' viewBox='0 0 11 11' stroke='#222'>
              <path d='M.5.5l10 10M10.5.5l-10 10' />
            </svg>
          </TitleAction>
        </DialogTitle>
        <DialogBody>
          <FieldLabel $mt={11}>
            Выберите урове<u>н</u>ь для изменения:
          </FieldLabel>
          <LevelArea>
            <LevelList>
              <LevelItems>
                {[1, 2, 3, 4, 5, 6, 7, 8, 9].map(n => (
                  <LevelItem key={n} $on={n === 2}>{n}</LevelItem>
                ))}
              </LevelItems>
              <LevelScroll>
                <Tri up color='#a0a0a0' />
                <Tri color='#a0a0a0' />
              </LevelScroll>
            </LevelList>
            <Preview>
              <PreviewGraphic />
            </Preview>
          </LevelArea>

          <SectionHead $mt={3}>Формат номера</SectionHead>
          <FieldLabel $mt={6}>
            <u>Ф</u>ормат номера:
          </FieldLabel>
          <InputRow>
            <TextInput>•</TextInput>
            <PushButton $w={68}>
              Шр<u>и</u>фт...
            </PushButton>
          </InputRow>
          <TwoColumns>
            <FieldLabel $mt={5}>
              Нуме<u>р</u>ация для этого уровня:
            </FieldLabel>
            <FieldLabel $mt={5} $off>Включить номер уровня:</FieldLabel>
            <SelectBox $mt={3}>
              Маркер, сплошной кружок:&nbsp; •
              <SelectArrow>
                <MiniChevron />
              </SelectArrow>
            </SelectBox>
            <SelectBox $mt={3} $off>
              &nbsp;
              <SelectArrow>
                <MiniChevron />
              </SelectArrow>
            </SelectBox>
          </TwoColumns>

          <SectionHead $mt={7}>Положение маркера</SectionHead>
          <PositionRow $mt={5}>
            <PositionLabel $w={128}>
              <u>В</u>ыравнивание номера:
            </PositionLabel>
            <SelectBox $w={118} $off>
              По левому краю
              <SelectArrow>
                <MiniChevron />
              </SelectArrow>
            </SelectBox>
            <PositionLabel $w={23} $ml={9}>
              н<u>а</u>:
            </PositionLabel>
            <SpinBox $w={84}>
              1,27 см
              <SpinArrows>
                <Tri up />
                <Tri />
              </SpinArrows>
            </SpinBox>
          </PositionRow>
          <PositionRow $mt={4}>
            <PositionLabel $w={128}>
              <u>О</u>тступ текста:
            </PositionLabel>
            <SpinBox $w={83}>
              1,9 см
              <SpinArrows>
                <Tri up />
                <Tri />
              </SpinArrows>
            </SpinBox>
            <PositionLabel $w={0} $ml={44} />
            <PushButton $w={112}>
              Дл<u>я</u> всех уровней...
            </PushButton>
          </PositionRow>
        </DialogBody>
        <Footer>
          <PushButton $w={70}>
            Боль<u>ш</u>е &gt;&gt;
          </PushButton>
          <FooterRight>
            <PushButton $w={68} $primary>ОК</PushButton>
            <PushButton $w={68}>Отмена</PushButton>
          </FooterRight>
        </Footer>
      </Dialog>
    </Window>
  </>
);

export default App;
